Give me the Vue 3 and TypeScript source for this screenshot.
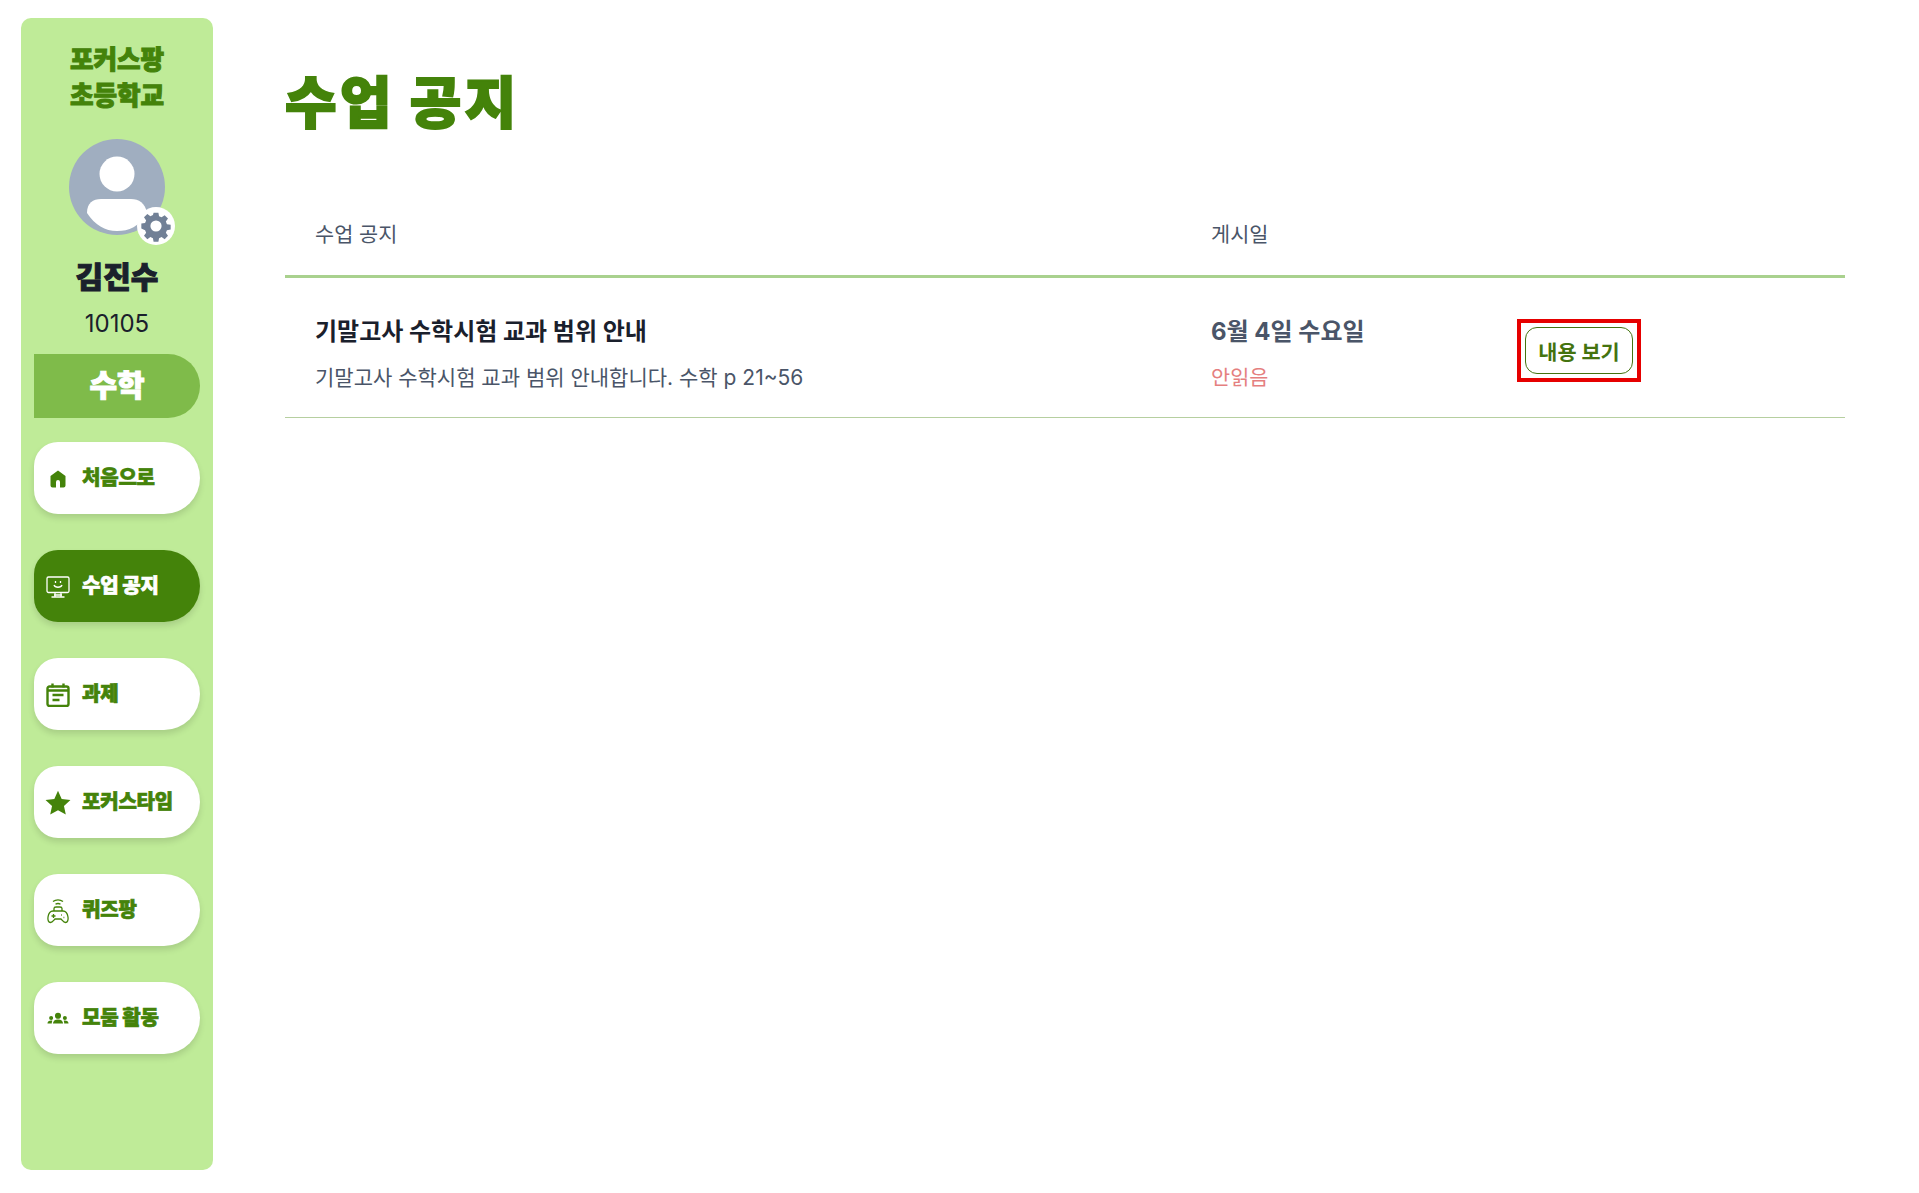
<template>
  <div class="page">
    <aside class="sidebar">
      <div class="school">포커스팡<br />초등학교</div>
      <div class="avatar">
        <svg class="avatar-img" viewBox="0 0 96 96">
          <circle cx="48" cy="48" r="48" fill="#a0aec0" />
          <circle cx="48" cy="35" r="17.5" fill="#fff" />
          <path d="M18 74 C18 64 24 60 32 60 H62 C70 60 76 64 78 74 C70 88 60 92 48 92 C36 92 26 86 18 74 Z" fill="#fff" />
        </svg>
        <span class="gear">
          <svg viewBox="0 0 24 24" width="32" height="32">
            <path fill="#718096" fill-rule="evenodd" d="M10.2 2h3.6l.5 2.7 1.9.8 2.3-1.6 2.5 2.5-1.6 2.3.8 1.9 2.8.5v3.6l-2.8.5-.8 1.9 1.6 2.3-2.5 2.5-2.300-1.6-1.900.8-.5 2.800h-3.600l-.5-2.800-1.900-.8-2.300 1.600-2.500-2.500 1.600-2.300-.8-1.900L1 13.800v-3.600l2.800-.5.8-1.900L3 5.500 5.500 3l2.300 1.600 1.900-.8zM12 7.800a4.200 4.200 0 1 0 0 8.400 4.200 4.200 0 0 0 0-8.400z" />
          </svg>
        </span>
      </div>
      <div class="name">김진수</div>
      <div class="number">10105</div>
      <div class="subject">수학</div>
      <nav class="menu">
        <a v-for="item in menu" :key="item.label" class="menu-item" :class="{ active: item.active }">
          <span class="menu-icon">
            <svg v-if="item.icon === 'home'" viewBox="0 0 24 24" width="24" height="24">
              <path fill="currentColor" fill-rule="evenodd" d="M12 3.500l7.500 5.500V18.500a2 2 0 0 1-2 2H6.500a2 2 0 0 1-2-2V9zM10 15v5.500h4V15a2 2 0 0 0-4 0z" />
            </svg>
            <svg v-else-if="item.icon === 'board'" viewBox="0 0 24 24" width="24" height="24" fill="none" stroke="currentColor" stroke-width="1.300">
              <rect x="1" y="2" width="22" height="15.500" rx="1.500" />
              <path d="M9 17.500V22M15 17.500V22M5.500 22h13M8 20h8" />
              <path d="M8 10c1 3 7 3 8 0" />
              <path d="M9.500 6v2M14.500 6v2" />
            </svg>
            <svg v-else-if="item.icon === 'task'" viewBox="0 0 24 24" width="24" height="24" fill="none" stroke="currentColor" stroke-width="2.400">
              <rect x="1.500" y="3.500" width="21" height="19.500" rx="2" />
              <path d="M6.500 .5v4M17.500 .5v4M1.500 7.500h21M6.500 12h11M6.500 17h7" />
            </svg>
            <svg v-else-if="item.icon === 'star'" viewBox="0 0 24 24" width="26" height="26">
              <path fill="currentColor" d="M12 .8l3.400 7.500 8.100.9-6 5.500 1.700 8-7.200-4.100-7.200 4.100 1.700-8-6-5.500 8.100-.9z" />
            </svg>
            <svg v-else-if="item.icon === 'game'" viewBox="0 0 24 26" width="24" height="26" fill="none" stroke="currentColor" stroke-width="1.300">
              <path d="M7 3.500c2.800-2.300 7.200-2.300 10 0M9.500 6.300c1.500-1 3.500-1 5 0" />
              <path d="M7 13c-3 0-4.500 3-5 6-.5 3 .5 5.500 2.500 5.500s3-2 4.500-3.500h6c1.500 1.500 2.500 3.500 4.500 3.500s3-2.500 2.500-5.500c-.5-3-2-6-5-6z" />
              <path d="M8 13v-2.500c0-1 1-1.500 2-1.500h4c1 0 2 .5 2 1.500V13M5.500 18h4M7.500 16v4M15 17h.8M17.500 19.500h.8" />
            </svg>
            <svg v-else viewBox="0 0 24 24" width="22" height="22">
              <circle cx="12" cy="8.500" r="3.300" fill="currentColor" />
              <path fill="currentColor" d="M6.500 17c0-2.800 2.200-4.500 5.500-4.500s5.500 1.700 5.500 4.500z" />
              <circle cx="4.500" cy="11" r="2.200" fill="currentColor" />
              <path fill="currentColor" d="M.5 17c0-2 1.700-3.300 4-3.300.6 0 1 .1 1.300.3-.4.800-.6 1.900-.6 3z" />
              <circle cx="19.500" cy="11" r="2.200" fill="currentColor" />
              <path fill="currentColor" d="M23.500 17c0-2-1.700-3.300-4-3.300-.6 0-1 .1-1.300.3.4.800.6 1.900.6 3z" />
            </svg>
          </span>
          <span class="menu-label">{{ item.label }}</span>
        </a>
      </nav>
    </aside>

    <main class="main">
      <h1 class="title">수업 공지</h1>
      <div class="table">
        <div class="row head">
          <div class="cell">수업 공지</div>
          <div class="cell">게시일</div>
          <div class="cell"></div>
        </div>
        <div v-for="notice in notices" :key="notice.title" class="row body">
          <div class="cell">
            <div class="notice-title">{{ notice.title }}</div>
            <div class="notice-desc">{{ notice.desc }}</div>
          </div>
          <div class="cell">
            <div class="notice-date">{{ notice.date }}</div>
            <div class="notice-read">{{ notice.read }}</div>
          </div>
          <div class="cell action">
            <div class="mark">
              <button class="view-btn">내용 보기</button>
            </div>
          </div>
        </div>
      </div>
    </main>
  </div>
</template>

<script setup lang="ts">
interface MenuItem {
  label: string;
  icon: string;
  active?: boolean;
}

interface Notice {
  title: string;
  desc: string;
  date: string;
  read: string;
}

const menu: MenuItem[] = [
  { label: '처음으로', icon: 'home' },
  { label: '수업 공지', icon: 'board', active: true },
  { label: '과제', icon: 'task' },
  { label: '포커스타임', icon: 'star' },
  { label: '퀴즈팡', icon: 'game' },
  { label: '모둠 활동', icon: 'team' },
];

const notices: Notice[] = [
  {
    title: '기말고사 수학시험 교과 범위 안내',
    desc: '기말고사 수학시험 교과 범위 안내합니다. 수학 p 21~56',
    date: '6월 4일 수요일',
    read: '안읽음',
  },
];
</script>

<style>
body {
  background: #fff;
}
</style>

<style scoped>
.page {
  display: flex;
  height: 1193px;
  overflow: hidden;
  padding: 18px 74px 23px 21px;
  box-sizing: border-box;
  font-family: Inter, "Noto Sans CJK KR", sans-serif;
}

.sidebar {
  flex: 0 0 192px;
  display: flex;
  flex-direction: column;
  align-items: center;
  padding: 24px 13px 0;
  box-sizing: border-box;
  background: #bfeb98;
  border-radius: 10px;
}

.school {
  font-size: 25.6px;
  font-weight: 900;
  line-height: 36px;
  text-align: center;
  color: #44830a;
  -webkit-text-stroke: 1px #44830a;
}

.avatar {
  position: relative;
  width: 96px;
  height: 96px;
  margin-top: 25px;
}

.avatar-img {
  display: block;
  width: 96px;
  height: 96px;
}

.gear {
  position: absolute;
  right: -10px;
  bottom: -10px;
  width: 38px;
  height: 38px;
  display: flex;
  align-items: center;
  justify-content: center;
  background: #fff;
  border-radius: 50%;
}

.name {
  margin-top: 21px;
  margin-bottom: 1px;
  font-size: 30px;
  font-weight: 900;
  line-height: 42px;
  color: #1a202c;
  -webkit-text-stroke: 1px #1a202c;
}

.number {
  margin-top: 7px;
  font-size: 24px;
  line-height: 36px;
  color: #1a202c;
}

.subject {
  width: 100%;
  height: 64px;
  margin-top: 12px;
  padding-bottom: 6px;
  box-sizing: border-box;
  display: flex;
  align-items: center;
  justify-content: center;
  font-size: 30px;
  font-weight: 900;
  color: #fff;
  background: #7fbb4a;
  border-radius: 0 32px 32px 0;
  -webkit-text-stroke: 1px #fff;
}

.menu {
  width: 100%;
  margin-top: 24px;
  display: flex;
  flex-direction: column;
  gap: 36px;
}

.menu-item {
  display: flex;
  align-items: center;
  height: 72px;
  padding-left: 12px;
  box-sizing: border-box;
  background: #fff;
  color: #44830a;
  border-radius: 24px 36px 36px 24px;
  box-shadow: 0 4px 6px rgba(0, 0, 0, 0.12);
}

.menu-item.active {
  background: #44830a;
  color: #fff;
}

.menu-icon {
  flex: 0 0 24px;
  min-width: 0;
  display: flex;
  align-items: center;
  justify-content: center;
  margin-top: 2px;
}

.menu-icon svg {
  flex: none;
}

.menu-label {
  margin-left: 12px;
  font-size: 20px;
  font-weight: 900;
  line-height: 28px;
  letter-spacing: -0.2px;
  -webkit-text-stroke: 0.7px currentColor;
}

.main {
  flex: 1;
  margin-left: 72px;
  min-width: 0;
}

.title {
  margin: 49px 0 0;
  font-size: 56px;
  font-weight: 900;
  line-height: 72px;
  letter-spacing: 3.5px;
  color: #44830a;
  -webkit-text-stroke: 2px #44830a;
}

.table {
  margin-top: 51px;
}

.row {
  display: grid;
  grid-template-columns: 896px 315px 1fr;
}

.cell {
  padding: 0 30px;
}

.head {
  height: 85px;
  align-items: center;
  font-size: 20.8px;
  color: #4a5568;
  border-bottom: 3px solid #a9d18e;
}

.body {
  height: 139px;
  box-sizing: content-box;
  border-bottom: 1px solid #b6cfa0;
}

.notice-title {
  margin-top: 39px;
  font-size: 24px;
  font-weight: 700;
  line-height: 30px;
  color: #1a202c;
}

.notice-desc {
  margin-top: 16px;
  font-size: 21px;
  line-height: 30px;
  color: #4a5568;
}

.notice-date {
  margin-top: 39px;
  font-size: 24px;
  font-weight: 700;
  line-height: 30px;
  color: #4a5568;
}

.notice-read {
  margin-top: 16px;
  font-size: 20.8px;
  line-height: 30px;
  color: #e57f7f;
}

.action {
  padding-left: 21px;
}

.mark {
  display: inline-block;
  margin-top: 41px;
  padding: 4px;
  border: 4px solid #e60000;
}

.view-btn {
  display: block;
  width: 108px;
  height: 47px;
  padding: 0;
  font-family: inherit;
  font-size: 20.8px;
  font-weight: 700;
  color: #44730f;
  background: #fff;
  border: 1px solid #44730f;
  border-radius: 12px;
}
</style>
